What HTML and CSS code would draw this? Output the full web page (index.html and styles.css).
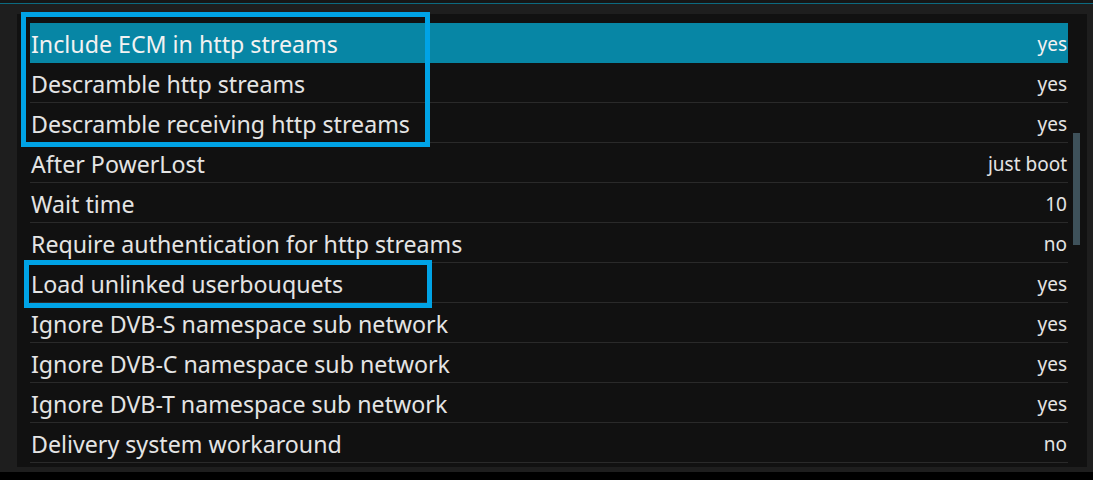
FILE: index.html
```html
<!DOCTYPE html>
<html lang="en">
<head>
  <meta charset="UTF-8" />
  <title>Settings</title>
  <link rel="stylesheet" href="styles.css">
</head>
<body>
  <div class="topline"></div>
  <div class="screen">
    <div class="panel">
      <div class="list">
        <div class="row selected"><span class="label">Include ECM in http streams</span><span class="value">yes</span></div>
        <div class="row"><span class="label">Descramble http streams</span><span class="value">yes</span></div>
        <div class="row"><span class="label">Descramble receiving http streams</span><span class="value">yes</span></div>
        <div class="row"><span class="label">After PowerLost</span><span class="value">just boot</span></div>
        <div class="row"><span class="label">Wait time</span><span class="value">10</span></div>
        <div class="row"><span class="label">Require authentication for http streams</span><span class="value">no</span></div>
        <div class="row"><span class="label">Load unlinked userbouquets</span><span class="value">yes</span></div>
        <div class="row"><span class="label">Ignore DVB-S namespace sub network</span><span class="value">yes</span></div>
        <div class="row"><span class="label">Ignore DVB-C namespace sub network</span><span class="value">yes</span></div>
        <div class="row"><span class="label">Ignore DVB-T namespace sub network</span><span class="value">yes</span></div>
        <div class="row"><span class="label">Delivery system workaround</span><span class="value">no</span></div>
      </div>
      <div class="scrollbar"><div class="thumb"></div></div>

      <!-- annotation boxes -->
      <div class="mark mark-1"></div>
      <div class="mark mark-2"></div>
    </div>
  </div>
  <div class="bottom"></div>
</body>
</html>
```

FILE: styles.css
```css
html, body {
  margin: 0;
  padding: 0;
  width: 100%;
  height: 100%;
  overflow: hidden;
  background: #000;
  font-family: 'Noto Sans', 'Open Sans', sans-serif;
}

.topline {
  height: 3px;
  background: #161616;
  border-bottom: 1px solid #0c6a80;
}

.screen {
  background: #1e1e1e;
  height: 468px;
  padding: 10px 6px 0 17px;
  box-sizing: border-box;
}

.panel {
  position: relative;
  background: #111;
  height: 453px;
  display: flex;
  padding: 9px 0 0 13px;
  box-sizing: border-box;
}

.list {
  width: 1038px;
}

.row {
  height: 40px;
  border-bottom: 1px solid #2a2a2a;
  box-sizing: border-box;
  display: flex;
  align-items: center;
  justify-content: space-between;
  color: #e4e4e4;
}

.row.selected {
  background: #0786a5;
  border-bottom-color: #0786a5;
  color: #f2f2f2;
}

.label {
  font-size: 23.2px;
  padding-left: 1px;
  padding-top: 2px;
}

.value {
  font-size: 19px;
  padding-right: 1px;
  padding-top: 2px;
}

.scrollbar {
  width: 7px;
  margin-left: 5px;
  padding-top: 110px;
}

.thumb {
  height: 112px;
  background: #3e515a;
}

.mark {
  position: absolute;
  border: 5px solid #00a3e6;
  box-sizing: border-box;
}

.mark-1 {
  left: 4px;
  top: -2px;
  width: 409px;
  height: 135px;
}

.mark-2 {
  left: 7px;
  top: 246px;
  width: 408px;
  height: 48px;
}
```
